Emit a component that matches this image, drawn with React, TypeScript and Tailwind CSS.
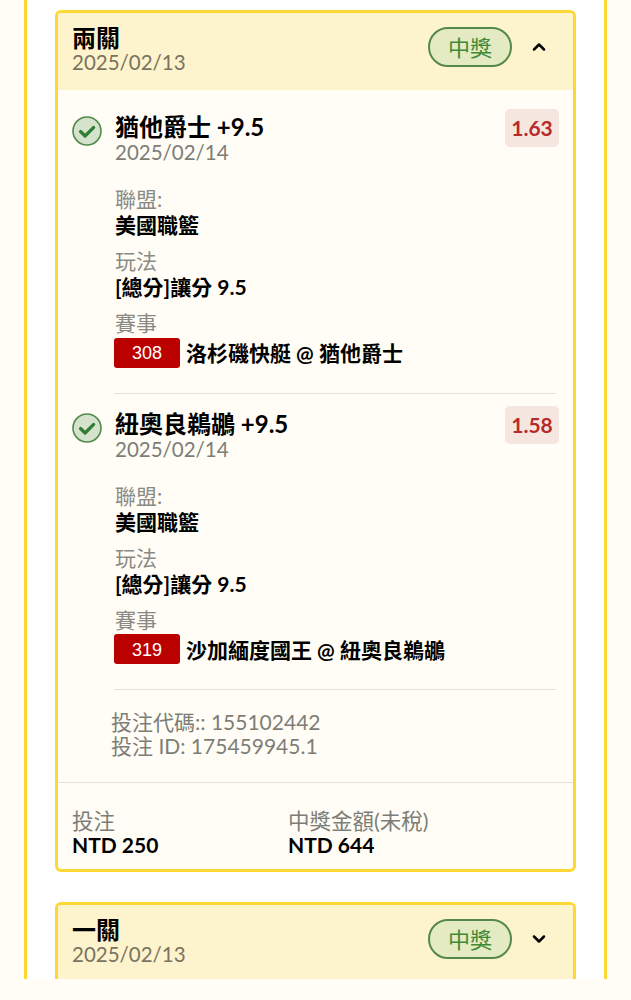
import React from 'react';
import { ChevronUp, ChevronDown } from 'lucide-react';

const font = "font-['Lato','Noto_Sans_CJK_TC',sans-serif]";

interface LegProps {
  team: string;
  odds: string;
  code: string;
  match: string;
}

const CheckIcon = () => (
  <svg width="30" height="30" viewBox="0 0 30 30" className="shrink-0">
    <circle cx="15" cy="15" r="14" fill="#d5e3cd" stroke="#4f8a4b" strokeWidth="1.6" />
    <path d="M8.5 15.5l4.6 4.5 8.6-8.6" fill="none" stroke="#2f7d32" strokeWidth="3.2" strokeLinecap="round" strokeLinejoin="round" />
  </svg>
);

const StatusPill = () => (
  <span className="flex h-[40px] w-[84px] items-center justify-center rounded-full border-2 border-[#55894a] bg-[#e4ebc2] text-[22px] text-[#3f8a38]">
    中獎
  </span>
);

const Leg: React.FC<LegProps> = ({ team, odds, code, match }) => (
  <div className="flex">
    <div className="w-[43px] shrink-0 pt-[7px]">
      <CheckIcon />
    </div>
    <div className="min-w-0 flex-1">
      <div className="flex items-start justify-between">
        <div className="pt-[4px]">
          <div className="text-[24px] leading-[27px] font-bold text-black">{team}</div>
          <div className="mt-px text-[20.5px] leading-[23px] text-[#7d7d78]">2025/02/14</div>
        </div>
        <span className="flex h-[38px] w-[54px] items-center justify-center rounded-[5px] bg-[#f6e6e0] text-[21px] font-bold text-[#b72b2b]">
          {odds}
        </span>
      </div>
      <div className="mt-[23px] text-[21px] leading-[23px] text-[#8a8a85]">聯盟:</div>
      <div className="mt-px text-[21px] leading-[27px] font-bold text-black">美國職籃</div>
      <div className="mt-[11px] text-[21px] leading-[23px] text-[#8a8a85]">玩法</div>
      <div className="mt-px text-[21px] leading-[27px] font-bold text-black">[總分]讓分 9.5</div>
      <div className="mt-[11px] text-[21px] leading-[23px] text-[#8a8a85]">賽事</div>
      <div className="mt-[3px] ml-[-1px] flex items-center">
        <span className="flex h-[30px] w-[66px] items-center justify-center rounded-[3px] bg-[#bb0000] pt-[2px] font-['Liberation_Sans',sans-serif] text-[18px] text-white">
          {code}
        </span>
        <span className="ml-[6px] text-[21px] font-bold text-black">{match}</span>
      </div>
    </div>
  </div>
);

const CardHeader: React.FC<{ title: string; open: boolean }> = ({ title, open }) => (
  <div className="flex h-[77px] items-center justify-between bg-[#fdf3cd] pr-[24px] pl-[14px]">
    <div className="mb-[5px]">
      <div className="text-[24px] leading-[27px] font-bold text-black">{title}</div>
      <div className="text-[20.5px] leading-[23px] text-[#7a7360]">2025/02/13</div>
    </div>
    <div className="mb-[9px] flex items-center gap-[17px]">
      <StatusPill />
      {open ? (
        <ChevronUp size={20} strokeWidth={3} className="text-black" />
      ) : (
        <ChevronDown size={20} strokeWidth={3} className="text-black" />
      )}
    </div>
  </div>
);

export default function App() {
  return (
    <div className={`flex h-[1000px] w-[631px] flex-col overflow-hidden bg-[#fffdf5] ${font}`}>
      <div className="min-h-0 flex-1 overflow-hidden">
        <div className="ml-[24px] h-full w-[583px] border-x-[3px] border-[#fdd835] bg-white px-[28px] pt-[10px]">
          <div className="overflow-hidden rounded-[6px] border-[3px] border-[#fdd835] bg-[#fffdf5]">
            <CardHeader title="兩關" open />
            <div className="px-[14px] pt-[19px]">
              <Leg team="猶他爵士 +9.5" odds="1.63" code="308" match="洛杉磯快艇 @ 猶他爵士" />
              <div className="mt-[24px] mb-[12px] ml-[42px] mr-[3px] h-px bg-[#e3e1dc]" />
              <Leg team="紐奧良鵜鶘 +9.5" odds="1.58" code="319" match="沙加緬度國王 @ 紐奧良鵜鶘" />
              <div className="mt-[24px] ml-[42px] mr-[3px] h-px bg-[#e3e1dc]" />
              <div className="pt-[20px] pb-[24px] pl-[39px] text-[21px] leading-[24px] text-[#7d7d78]">
                <div>投注代碼:: 155102442</div>
                <div>投注 ID: 175459945.1</div>
              </div>
            </div>
            <div className="flex h-[87px] border-t border-[#e3e1dc] pt-[26px] pl-[14px]">
              <div className="w-[216px]">
                <div className="text-[21.5px] leading-[24px] text-[#7d7d78]">投注</div>
                <div className="mt-px text-[21px] leading-[22px] font-bold text-black">NTD 250</div>
              </div>
              <div>
                <div className="text-[21.5px] leading-[24px] text-[#7d7d78]">中獎金額(未稅)</div>
                <div className="mt-px text-[21px] leading-[22px] font-bold text-black">NTD 644</div>
              </div>
            </div>
          </div>
          <div className="mt-[30px] overflow-hidden rounded-[6px] border-[3px] border-[#fdd835] bg-[#fffdf5]">
            <CardHeader title="一關" open={false} />
            <div className="h-[60px]" />
          </div>
        </div>
      </div>
      <div className="h-[21px] shrink-0 bg-[#fffdf5]" />
    </div>
  );
}
